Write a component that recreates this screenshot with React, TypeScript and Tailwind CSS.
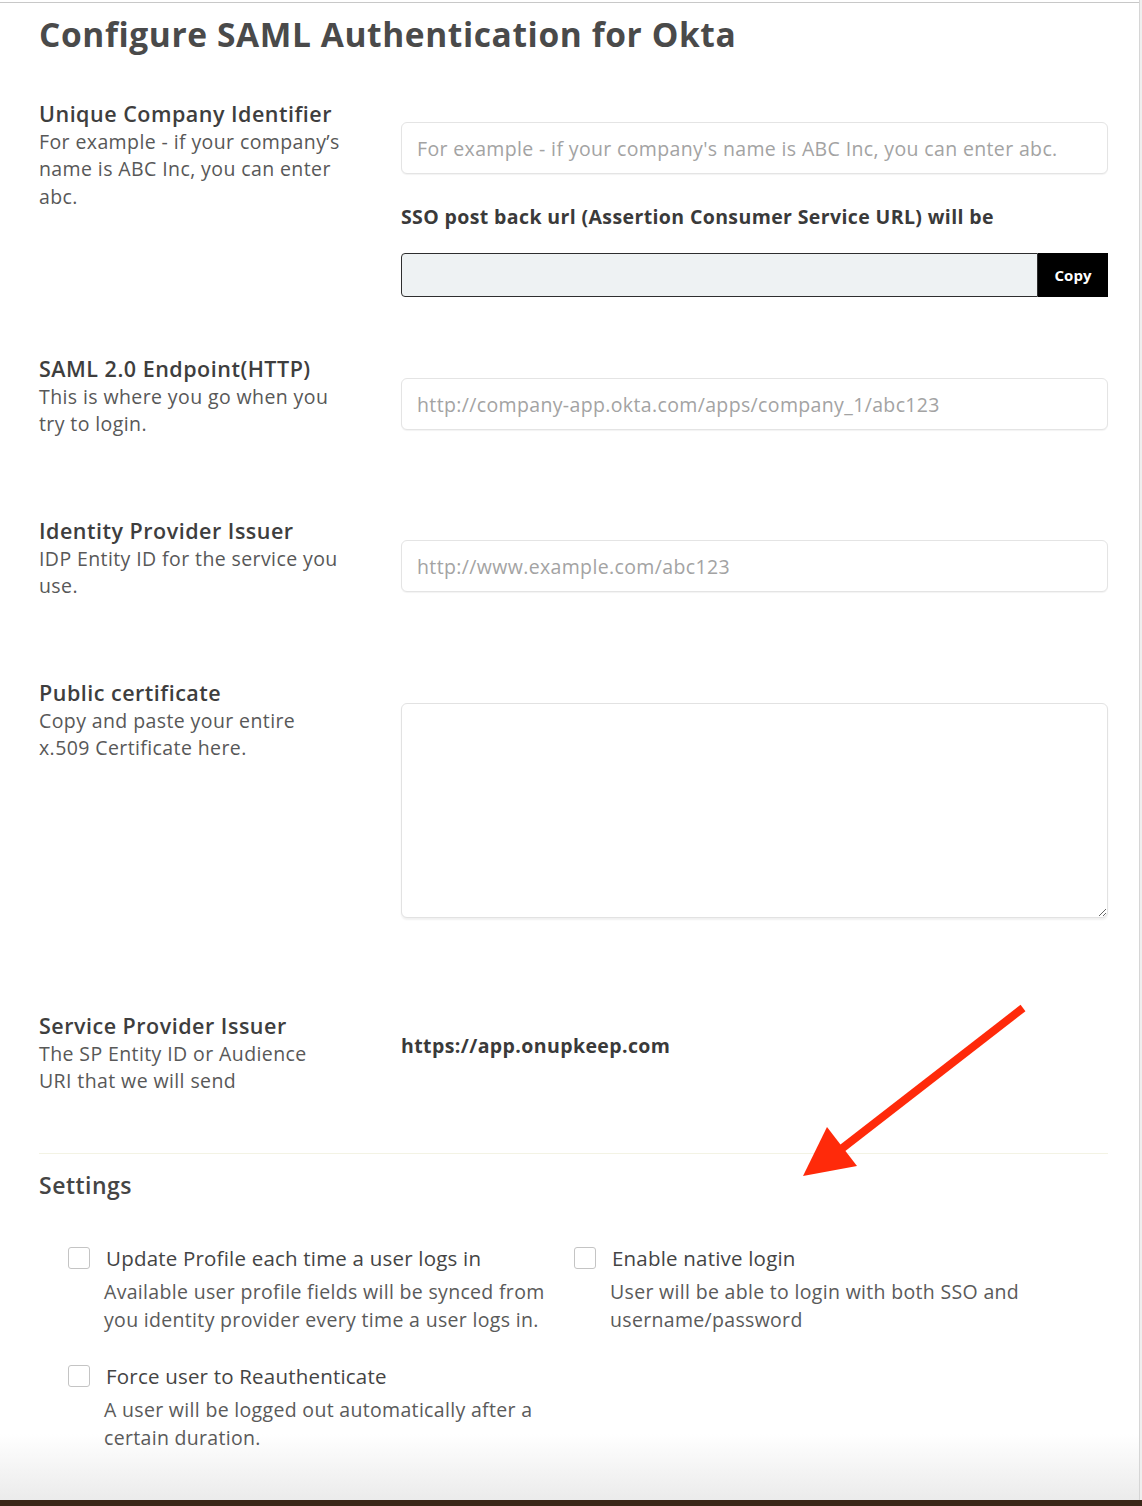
import React from "react";

const font = { fontFamily: '"Open Sans", "Liberation Sans", sans-serif' };

type FieldRowProps = {
  label: string;
  lines: string[];
  height: string;
  children: React.ReactNode;
};

function FieldRow({ label, lines, height, children }: FieldRowProps) {
  return (
    <div className={`grid grid-cols-[362px_707px] ${height}`}>
      <div className="leading-[27.5px]">
        <p className="text-[21.5px] font-semibold tracking-[0.5px] text-[#3e3e3e]">{label}</p>
        {lines.map((l) => (
          <p key={l} className="text-[19.5px] tracking-[0.4px] text-[#585858] whitespace-nowrap">
            {l}
          </p>
        ))}
      </div>
      <div>{children}</div>
    </div>
  );
}

function TextInput({ placeholder }: { placeholder: string }) {
  return (
    <input
      readOnly
      placeholder={placeholder}
      className="w-full h-[52px] rounded-md border border-[#e4e4e4] bg-white px-[15px] text-[19.5px] tracking-[0.36px] text-[#444] placeholder:text-[#a3a3a3] shadow-[0_1px_1px_rgba(0,0,0,0.05)] outline-none"
      style={font}
    />
  );
}

function Option({ title, lines }: { title: string; lines: string[] }) {
  return (
    <div className="w-[506px]">
      <div className="flex items-center gap-4 h-[28px]">
        <span className="w-[22px] h-[22px] rounded-[3px] border border-[#c4c4c4] bg-white shrink-0" />
        <span className="text-[20.5px] tracking-[0.2px] text-[#444] leading-[28px] whitespace-nowrap">
          {title}
        </span>
      </div>
      <div className="pl-9 mt-[6px] text-[19.5px] tracking-[0.32px] leading-[28px] text-[#5a5a5a]">
        {lines.map((l) => (
          <p key={l} className="whitespace-nowrap">
            {l}
          </p>
        ))}
      </div>
    </div>
  );
}

export default function App() {
  return (
    <div className="w-[1142px] h-[1506px] flex flex-col bg-[#efefef] overflow-hidden" style={font}>
      <div className="relative flex-1 w-[1140px] border-r border-[#d6d6d6] bg-[linear-gradient(180deg,#ffffff_0%,#ffffff_95.6%,#ebebeb_100%)] pt-[2px]">
        <div className="h-px bg-[#c8c8c8]" />
        <div className="pl-[39px]">
          <h1 className="mt-[11px] text-[33.5px] tracking-[0.6px] leading-[40px] font-bold text-[#4a4a4a] whitespace-nowrap">
            Configure SAML Authentication for Okta
          </h1>

          <div className="mt-[46px]">
            <FieldRow
              label="Unique Company Identifier"
              lines={["For example - if your company’s", "name is ABC Inc, you can enter", "abc."]}
              height="h-[255px]"
            >
              <div className="pt-[22px]">
                <TextInput placeholder="For example - if your company's name is ABC Inc, you can enter abc." />
                <p className="mt-[31px] text-[19.5px] tracking-[0.38px] leading-[24px] font-bold text-[#3a3a3a] whitespace-nowrap">
                  SSO post back url (Assertion Consumer Service URL) will be
                </p>
                <div className="mt-[24px] flex h-[44px]">
                  <div className="flex-1 rounded-l-[4px] border border-[#2e2e2e] bg-[#eef2f3]" />
                  <button className="w-[70px] bg-black text-white text-[15px] font-bold">Copy</button>
                </div>
              </div>
            </FieldRow>

            <FieldRow
              label="SAML 2.0 Endpoint(HTTP)"
              lines={["This is where you go when you", "try to login."]}
              height="h-[162px]"
            >
              <div className="pt-[23px]">
                <TextInput placeholder="http://company-app.okta.com/apps/company_1/abc123" />
              </div>
            </FieldRow>

            <FieldRow
              label="Identity Provider Issuer"
              lines={["IDP Entity ID for the service you", "use."]}
              height="h-[162px]"
            >
              <div className="pt-[23px]">
                <TextInput placeholder="http://www.example.com/abc123" />
              </div>
            </FieldRow>

            <FieldRow
              label="Public certificate"
              lines={["Copy and paste your entire", "x.509 Certificate here."]}
              height="h-[333px]"
            >
              <div className="pt-[24px]">
                <textarea
                  readOnly
                  className="block w-full h-[215px] rounded-md border border-[#e2e2e2] bg-white shadow-[0_2px_2px_rgba(0,0,0,0.06)] outline-none"
                />
              </div>
            </FieldRow>

            <FieldRow
              label="Service Provider Issuer"
              lines={["The SP Entity ID or Audience", "URI that we will send"]}
              height="h-[141px]"
            >
              <p className="pt-[22px] text-[19.5px] tracking-[0.4px] leading-[24px] font-bold text-[#3a3a3a]">
                https://app.onupkeep.com
              </p>
            </FieldRow>
          </div>

          <div className="w-[1069px] h-px bg-[#f3f3e4]" />

          <h2 className="mt-[16px] text-[23px] tracking-[0.5px] leading-[30px] font-semibold text-[#454545]">
            Settings
          </h2>

          <div className="mt-[44px] pl-[29px]">
            <div className="flex">
              <Option
                title="Update Profile each time a user logs in"
                lines={[
                  "Available user profile fields will be synced from",
                  "you identity provider every time a user logs in.",
                ]}
              />
              <Option
                title="Enable native login"
                lines={["User will be able to login with both SSO and", "username/password"]}
              />
            </div>
            <div className="mt-[28px]">
              <Option
                title="Force user to Reauthenticate"
                lines={["A user will be logged out automatically after a", "certain duration."]}
              />
            </div>
          </div>
        </div>

        <svg
          className="absolute left-[790px] top-[995px]"
          width="250"
          height="195"
          viewBox="790 995 250 195"
        >
          <line x1="1023" y1="1008" x2="840" y2="1150" stroke="#ff2a0a" strokeWidth="8" />
          <polygon points="803,1176 827,1127 857,1166" fill="#ff2a0a" />
        </svg>
      </div>
      <div className="h-[6px] bg-[#3a2718]" />
    </div>
  );
}
